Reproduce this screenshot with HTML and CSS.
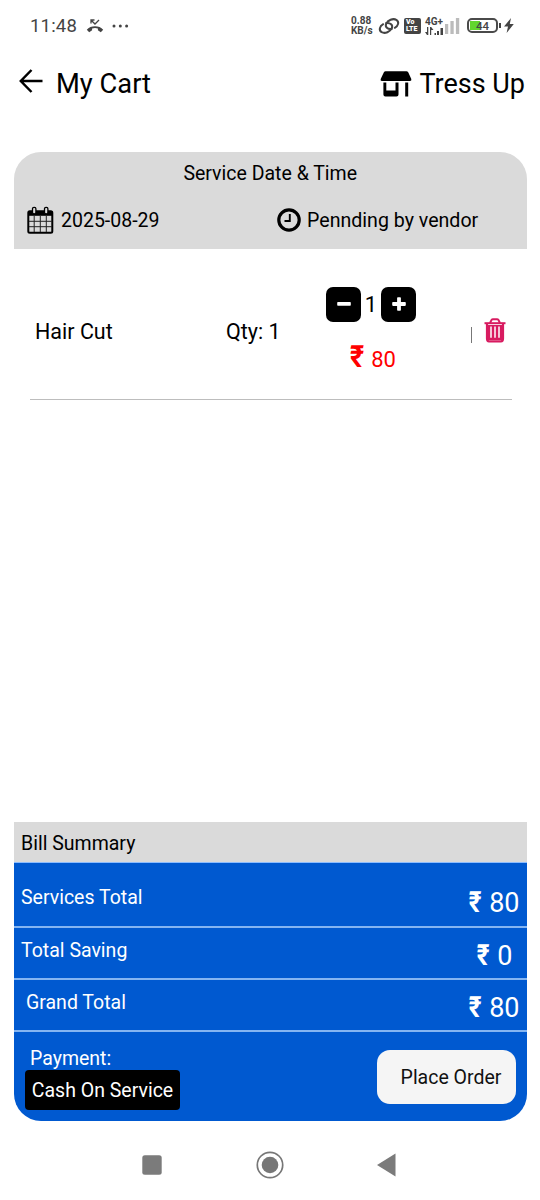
FILE: index.html
```html
<!DOCTYPE html>
<html lang="en">
<head>
<meta charset="utf-8">
<title>My Cart</title>
<link rel="stylesheet" href="styles.css">
</head>
<body>
<div class="statusbar">
  <span class="clock">11:48</span>
  <svg class="missed" width="18" height="14" viewBox="0 0 18 14"><path d="M.8 10.8C4.5 6.2 13.500 6.200 17.200 10.800L14.800 13.200L11.900 11.300V9.500Q9 8.500 6.100 9.500V11.300L3.200 13.200Z" fill="#444"/><path d="M5 4.500V1H8.500M5.200 1.200L9 5L13 1" fill="none" stroke="#444" stroke-width="1.300"/></svg>
  <svg class="dots" width="17" height="4" viewBox="0 0 17 4" fill="#444"><circle cx="2" cy="2" r="1.500"/><circle cx="8.300" cy="2" r="1.500"/><circle cx="14.600" cy="2" r="1.500"/></svg>
  <span class="speed">0.88<br>KB/s</span>
  <svg class="link" width="22" height="18" viewBox="0 0 22 18" fill="none" stroke="#444" stroke-width="2" stroke-linecap="round"><path d="M13.800 12C9.500 12.600 6.800 10 8.200 6.800C9.800 3.200 15 1 18.300 2.800C21.600 4.800 20.300 9 16.800 10.800"/><path d="M8.200 6C12.500 5.400 15.200 8 13.800 11.200C12.200 14.800 7 17 3.700 15.200C.4 13.200 1.700 9 5.200 7.200"/></svg>
  <span class="volte"><span>Vo</span><span>LTE</span></span>
  <span class="network"><span>4G+</span><svg width="19" height="8" viewBox="0 0 19 8" fill="#444"><path d="M2 0H3.300V8H2L0 5H2ZM5 0H6.200L8.500 3H6.200V8H5ZM9.500 6h1.500v2h-1.500ZM12 4h2v4h-2ZM15.500 1h2.500v7h-2.500Z"/></svg></span>
  <svg class="signal" width="15" height="16" viewBox="0 0 15 16" fill="#bbb"><path d="M0 6h3.200v10H0ZM5.400 3h3.300v13H5.400ZM10.900 0h3.300v16h-3.300Z"/></svg>
  <span class="battery">44</span>
  <svg class="bolt" width="10" height="15" viewBox="0 0 10 15"><path d="M7 0L0 8.500H4L2.600 15L9.800 6H5.800Z" fill="#444"/></svg>
</div>
<header class="header">
  <svg class="back" width="24" height="24" viewBox="0 0 24 24" fill="none" stroke="#000" stroke-width="2.500"><path d="M12.500 1L1.800 12L12.500 23M2 12H23.500"/></svg>
  <h1 class="title">My Cart</h1>
  <svg class="shop" width="32" height="26" viewBox="0 0 32 26"><path d="M5.500 .3H26.500Q27.500 .3 28.200 1.200L31.300 8Q31.800 9.900 30 9.900H1.900Q0 9.900 .7 8L3.900 1.200Q4.500 .3 5.500 .3ZM3.400 11.500H6.300V19.500H15.500V11.500H18.500V23.500Q18.500 25.500 16.500 25.500H5.400Q3.400 25.500 3.400 23.500ZM25.200 11.500H28.200V25.500H25.200Z"/></svg>
  <span class="brand">Tress Up</span>
</header>
<main class="content">
  <section class="schedule">
    <h2 class="schedule-title">Service Date &amp; Time</h2>
    <div class="schedule-row">
      <svg class="calendar" width="27" height="29" viewBox="0 0 27 29"><rect x="1.300" y="5.300" width="24" height="21.500" rx="1.500" fill="none" stroke="#000" stroke-width="2"/><path d="M1 5h24.500v4.800H1Z"/><path d="M7.200 10V26M13.300 10V26M19.300 10V26M2 15.300H25M2 20.700H25" stroke="#222" stroke-width="1"/><rect x="5.500" y="1.300" width="3.400" height="6.500" rx="1.500" fill="#dadada" stroke="#000" stroke-width="1.300"/><rect x="17.500" y="1.300" width="3.400" height="6.500" rx="1.500" fill="#dadada" stroke="#000" stroke-width="1.300"/></svg>
      <span class="date">2025-08-29</span>
      <svg class="time-icon" width="24" height="24" viewBox="0 0 24 24" fill="none" stroke="#000"><circle cx="12" cy="12" r="10.200" stroke-width="3.200"/><path d="M12.800 6V13H7.500" stroke-width="1.900"/></svg>
      <span class="pending">Pennding by vendor</span>
    </div>
  </section>
  <section class="item">
    <span class="item-name">Hair Cut</span>
    <span class="item-qty">Qty: 1</span>
    <div class="item-control">
      <div class="stepper">
        <button class="step" aria-label="Decrease"><svg width="14" height="14" viewBox="0 0 14 14"><rect x=".2" y="5" width="13.600" height="3.800" rx=".8" fill="#fff"/></svg></button>
        <span class="count">1</span>
        <button class="step" aria-label="Increase"><svg width="14" height="14" viewBox="0 0 14 14" fill="#fff"><rect x=".2" y="5.100" width="13.600" height="3.800" rx=".8"/><rect x="5.100" y=".2" width="3.800" height="13.600" rx=".8"/></svg></button>
      </div>
      <div class="price"><b class="rupee">₹</b><span>80</span></div>
    </div>
    <span class="divider"></span>
    <svg class="trash" width="22" height="25" viewBox="0 0 22 25" fill="none" stroke="#d81b60"><path d="M.5 5.200H21.500" stroke-width="2"/><path d="M6 5L7.500 2Q8 1.200 9 1.200H13Q14 1.200 14.500 2L16 5" stroke-width="1.900"/><path d="M3 5.500V20.500Q3 23.400 5 23.400H17Q19 23.400 19 20.500V5.500" stroke-width="2.200"/><path d="M4 7H18V22H4Z" fill="#d81b60" stroke="none"/><path d="M7 8.500V19.800M11 8.500V19.800M15 8.500V19.800" stroke="#fff" stroke-width="1.500"/></svg>
  </section>
  <section class="bill">
    <h2 class="bill-title">Bill Summary</h2>
    <div class="bill-row services"><span>Services Total</span><span class="amount"><b class="rupee">₹</b>80</span></div>
    <div class="bill-row saving"><span>Total Saving</span><span class="amount"><b class="rupee">₹</b>0</span></div>
    <div class="bill-row grand"><span>Grand Total</span><span class="amount"><b class="rupee">₹</b>80</span></div>
    <div class="checkout">
      <div class="payment"><span class="payment-label">Payment:</span><span class="method">Cash On Service</span></div>
      <button class="order">Place Order</button>
    </div>
  </section>
</main>
<nav class="navbar">
  <svg width="20" height="20" viewBox="0 0 20 20"><rect x=".3" y=".3" width="19.400" height="19.400" rx="2.500" fill="#7b7b7b"/></svg>
  <svg width="28" height="28" viewBox="0 0 28 28"><circle cx="14" cy="14" r="12.700" fill="none" stroke="#777" stroke-width="1.700"/><circle cx="14" cy="14" r="8.300" fill="#777"/></svg>
  <svg width="20" height="24" viewBox="0 0 20 24"><path d="M0 12L18.500 .6V23.400Z" fill="#7b7b7b"/></svg>
</nav>
</body>
</html>
```
FILE: styles.css
```css
* { box-sizing: border-box; }
body {
  margin: 0;
  width: 540px;
  height: 1200px;
  display: flex;
  flex-direction: column;
  background: #fff;
  color: #000;
  font: 19.5px/24px Roboto, sans-serif;
  white-space: nowrap;
  overflow: hidden;
}
body > * { flex: none; }
svg { display: block; flex: none; }
h1, h2 { margin: 0; font-weight: 400; font-size: inherit; }
button { border: 0; padding: 0; font: inherit; color: inherit; }

.statusbar { height: 51px; display: flex; align-items: center; padding-left: 30px; color: #444; }
.clock { width: 56px; font-size: 18.5px; letter-spacing: .2px; }
.dots { margin-left: 8px; }
.speed { width: 27px; margin-left: 222px; font-size: 10px; line-height: 9.5px; font-weight: 700; }
.volte {
  width: 17px; height: 16px; margin-left: 4px; padding: 1px 2px;
  display: flex; flex-direction: column;
  border-radius: 2px; background: #444; color: #fff;
  font-size: 7px; line-height: 7px; font-weight: 900;
}
.network { width: 20px; margin-left: 4px; font-size: 10px; line-height: 10px; font-weight: 700; }
.network span { display: block; }
.battery {
  position: relative;
  width: 31px; height: 15px; margin-left: 7px;
  border: 2px solid #4a4a4a; border-radius: 5px;
  background: linear-gradient(#62d62e, #62d62e) 1px center / 10px 9px no-repeat;
  text-align: center; font-size: 11.5px; line-height: 12px; font-weight: 500;
}
.battery::after { content: ""; position: absolute; right: -5px; top: 3px; width: 2px; height: 5px; background: #444; }
.bolt { margin-left: 6px; }

.header { height: 65px; display: flex; align-items: center; padding: 0 15px 0 19px; font-size: 27px; }
.back { margin-bottom: 6px; }
.title { margin-left: 13px; font-size: 27.300px; }
.shop { margin-left: auto; }
.brand { margin-left: 7px; }

.content { height: 969.500px; margin: 35.500px 13.500px 0 14px; display: flex; flex-direction: column; }
.schedule { height: 97.500px; padding-top: 10px; border-radius: 27px 27px 0 0; background: #dadada; }
.schedule-title { text-align: center; }
.schedule-row { display: flex; align-items: center; height: 29px; margin-top: 20px; padding-left: 13px; }
.date { width: 216px; margin-left: 7px; padding-top: 2px; }
.pending { margin-left: 6px; padding-top: 2px; font-size: 19.600px; }

.item {
  height: 150.500px; margin: 0 15px 0 16px; padding: 37.500px 5px 0;
  display: flex; align-items: flex-start;
  border-bottom: 1px solid #bdbdbd;
}
.item-name, .item-qty { margin-top: 33.500px; font-size: 21.5px; }
.item-name { width: 191px; }
.item-qty { width: 100px; }
.item-control { width: 90px; }
.stepper { display: flex; align-items: center; justify-content: space-between; height: 35px; font-size: 22px; }
.count { padding-top: 2px; }
.step { width: 35px; height: 35px; display: grid; place-items: center; border-radius: 7px; background: #000; }
.price { margin-top: 26px; padding-left: 24px; display: flex; align-items: center; gap: 7px; color: #f00; font-size: 22px; }
.rupee { display: inline-block; font-weight: 700; transform: scale(.9, 1.08); }
.price .rupee { font-size: 27px; transform: scale(1, 1.13) translateY(-3px); }
.divider { width: 1px; height: 16px; margin: 40px 0 0 55px; background: #777; }
.trash { margin: 31px 0 0 12px; }

.bill { margin-top: auto; }
.bill-title { height: 40.500px; padding: 10px 7px 0; background: #dadada; }
.bill-row {
  display: flex; justify-content: space-between;
  padding: 11px 7px 0; height: 52px;
  border-bottom: 2px solid #84b5f2; background: #0059d0; color: #fff;
}
.services { height: 65.500px; padding-top: 23px; border-top: 1px solid #8dbdff; }
.saving { padding-right: 14px; }
.grand { padding-left: 12px; }
.amount { display: flex; gap: 7px; margin-top: 5px; font-size: 27px; }
.checkout {
  height: 89.500px; padding: 15px 11px 0;
  display: flex; justify-content: space-between;
  border-radius: 0 0 27px 27px; background: #0059d0;
}
.payment { color: #fff; }
.payment-label { display: block; padding-left: 5px; }
.method { display: grid; place-items: center; width: 155px; height: 40px; margin-top: -1px; padding-top: 2px; border-radius: 4px; background: #000; }
.order { width: 139px; height: 54px; margin-top: 3px; padding: 2px 0 0 10px; border-radius: 13px; background: #f5f5f5; color: #111; }

.navbar { height: 79px; display: flex; justify-content: space-between; align-items: center; padding: 9px 143px 0 142px; }
```
